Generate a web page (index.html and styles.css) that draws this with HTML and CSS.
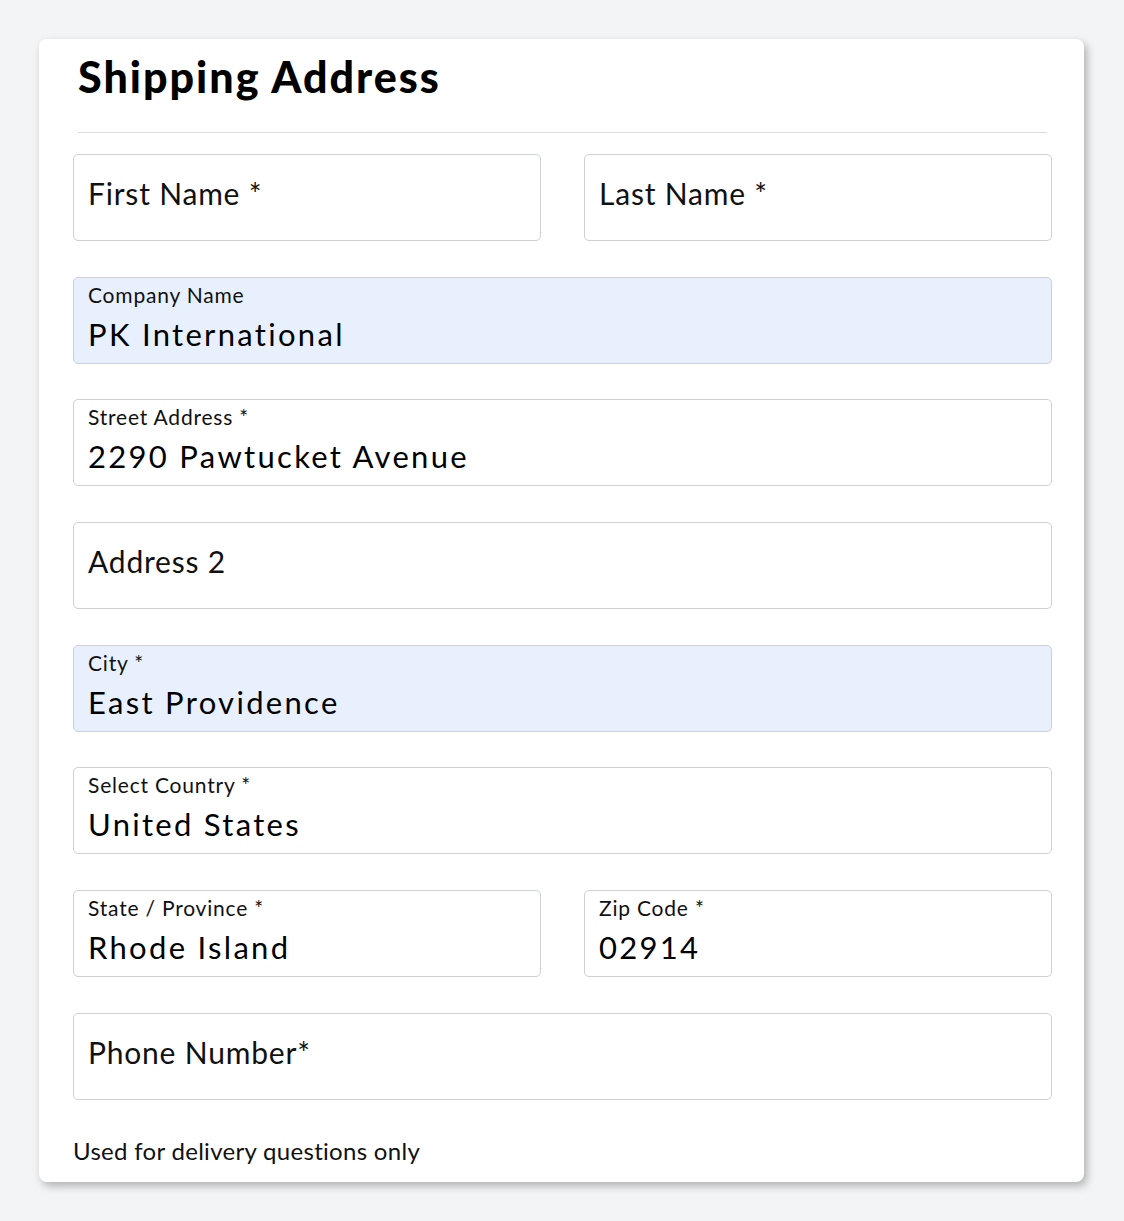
FILE: index.html
```html
<!DOCTYPE html>
<html lang="en">
<head>
    <meta charset="UTF-8">
    <meta name="viewport" content="width=device-width, initial-scale=1.0">
    <title>Shipping Address</title>
    <link rel="stylesheet" href="styles.css">
</head>
<body>
    <div class="card">
        <h1 class="card-title">Shipping Address</h1>
        <div class="divider"></div>

        <div class="row two">
            <div class="field">
                <span class="placeholder">First Name *</span>
            </div>
            <div class="field">
                <span class="placeholder">Last Name *</span>
            </div>
        </div>

        <div class="row">
            <div class="field filled autofill">
                <span class="label">Company Name</span>
                <span class="value">PK International</span>
            </div>
        </div>

        <div class="row">
            <div class="field filled">
                <span class="label">Street Address *</span>
                <span class="value">2290 Pawtucket Avenue</span>
            </div>
        </div>

        <div class="row">
            <div class="field">
                <span class="placeholder">Address 2</span>
            </div>
        </div>

        <div class="row">
            <div class="field filled autofill">
                <span class="label">City *</span>
                <span class="value">East Providence</span>
            </div>
        </div>

        <div class="row">
            <div class="field filled">
                <span class="label">Select Country *</span>
                <span class="value">United States</span>
            </div>
        </div>

        <div class="row two">
            <div class="field filled">
                <span class="label">State / Province *</span>
                <span class="value">Rhode Island</span>
            </div>
            <div class="field filled">
                <span class="label">Zip Code *</span>
                <span class="value">02914</span>
            </div>
        </div>

        <div class="row">
            <div class="field">
                <span class="placeholder">Phone Number*</span>
            </div>
        </div>

        <p class="hint">Used for delivery questions only</p>
    </div>
</body>
</html>
```

FILE: styles.css
```css
* {
    margin: 0;
    padding: 0;
    box-sizing: border-box;
}

body {
    font-family: 'Lato', 'Noto Sans', sans-serif;
    color: #000;
    background: #f3f4f6;
    padding: 39px 40px 39px 39px;
}

.card {
    background: #fff;
    border-radius: 8px;
    box-shadow: 3px 4px 8px rgba(0, 0, 0, 0.28);
    padding: 8px 32px 16px 34px;
    min-height: 1143px;
}

.card-title {
    font-size: 43px;
    font-weight: 900;
    line-height: 60px;
    letter-spacing: 2px;
    margin-left: 5px;
}

.divider {
    height: 1px;
    background: #dcdcdc;
    margin: 25px 5px 21px 5px;
}

/* Form rows */
.row {
    display: flex;
    gap: 43px;
    margin-bottom: 35.7px;
}

.row.two .field {
    flex: 1;
}

.field {
    flex: 1;
    height: 87px;
    border: 1px solid #cdd0d4;
    border-radius: 5px;
    padding: 20px 15px 0 14px;
    display: flex;
    flex-direction: column;
}

.field.filled {
    padding-top: 5px;
}

.field.autofill {
    background: #e8f0fe;
}

.placeholder {
    font-size: 30px;
    line-height: 36px;
    letter-spacing: 0.8px;
    color: #111;
}

.label {
    font-size: 21px;
    line-height: 24px;
    letter-spacing: 0.8px;
    color: #111;
}

.value {
    font-size: 31px;
    line-height: 36px;
    letter-spacing: 2.3px;
    margin-top: 9px;
}

.hint {
    font-size: 24px;
    line-height: 30px;
    letter-spacing: 0.3px;
    margin-top: 1px;
    color: #111;
}
```
